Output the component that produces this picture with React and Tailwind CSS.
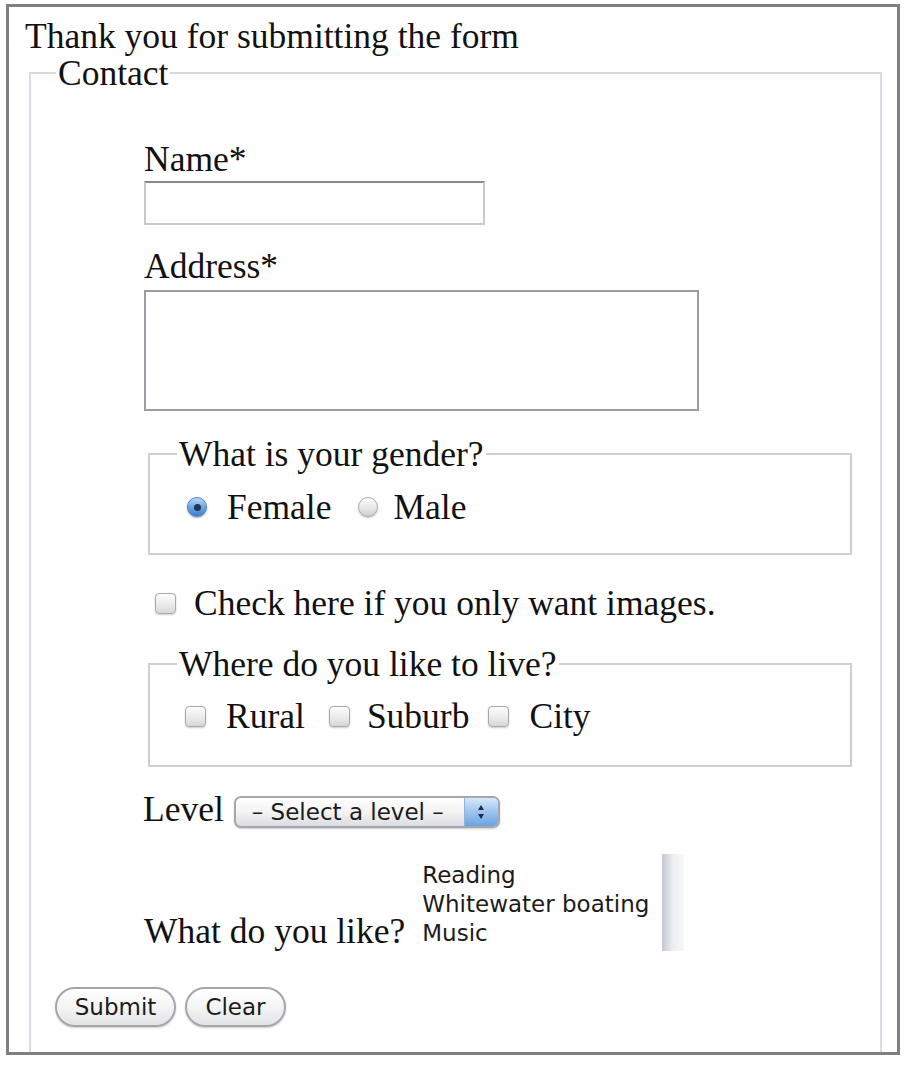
import React from 'react';

const Radio = ({ checked }) =>
  checked ? (
    <span className="flex items-center justify-center w-[20px] h-[20px] rounded-full border border-[#4f7fb8] bg-linear-to-b from-[#bcdaf6] via-[#6aa6e4] to-[#3b7fd0] shadow-[0_1px_2px_rgba(0,0,0,0.35)]">
      <span className="w-[7px] h-[7px] rounded-full bg-[#1d3550]" />
    </span>
  ) : (
    <span className="block w-[20px] h-[20px] rounded-full border border-[#a9abae] bg-linear-to-b from-[#fbfbfb] via-[#e9e9e9] to-[#cfd0d2] shadow-[0_1px_2px_rgba(0,0,0,0.25)]" />
  );

const Checkbox = () => (
  <span className="block w-[21px] h-[21px] rounded-[4px] border border-[#a7a9ad] bg-linear-to-b from-[#fdfdfd] via-[#ededed] to-[#d6d7d9] shadow-[0_1px_2px_rgba(0,0,0,0.2)]" />
);

const Fieldset = ({ legend, className, children }) => (
  <fieldset className={'border-2 border-[#cbcfd6] pl-[27px] ' + className}>
    <legend className="px-[2px]">{legend}</legend>
    {children}
  </fieldset>
);

const PillButton = ({ label, width }) => (
  <button
    type="button"
    className={'h-[40px] rounded-full border-2 border-[#a2a6ad] bg-linear-to-b from-white via-[#f4f4f4] to-[#e2e3e5] shadow-[0_1px_2px_rgba(0,0,0,0.2)] font-[\'DejaVu_Sans\',sans-serif] text-[23px] leading-none text-[#1b1b1b] ' + width}
  >
    {label}
  </button>
);

export default function App() {
  const likes = ['Reading', 'Whitewater boating', 'Music'];

  return (
    <div className="min-h-screen bg-white pt-[4px] pl-[6px]">
      <div className="w-[894px] h-[1051px] border-[3px] border-[#7e7e83] overflow-hidden font-['Liberation_Serif',serif] text-[35.5px] leading-[40px] text-[#111]">
        <p className="pl-[16px] pt-[9px] -mb-[3px]">Thank you for submitting the form</p>

        <fieldset className="ml-[20px] mr-[15px] border-2 border-[#d8dce2] pl-[25px] pb-[80px]">
          <legend className="px-[2px]">Contact</legend>

          <label className="block ml-[88px] mt-[46px]">Name*</label>
          <input
            type="text"
            className="block ml-[88px] mt-[2px] w-[341px] h-[44px] border-2 border-[#c6cad0] border-t-[#868a91] bg-white outline-none"
          />

          <label className="block ml-[88px] mt-[21px]">Address*</label>
          <textarea className="block ml-[88px] mt-[4px] w-[555px] h-[121px] border-2 border-[#999da4] bg-white resize-none outline-none" />

          <Fieldset legend="What is your gender?" className="ml-[92px] mt-[23px] w-[704px] pb-[26px]">
            <div className="mt-[13px] flex items-center pl-[10px]">
              <Radio checked />
              <span className="ml-[20px]">Female</span>
              <span className="ml-[26px]"><Radio /></span>
              <span className="ml-[16px]">Male</span>
            </div>
          </Fieldset>

          <div className="mt-[28px] ml-[99px] flex items-center">
            <Checkbox />
            <span className="ml-[18px]">Check here if you only want images.</span>
          </div>

          <Fieldset legend="Where do you like to live?" className="ml-[92px] mt-[21px] w-[704px] pb-[29px]">
            <div className="mt-[12px] flex items-center pl-[8px]">
              <Checkbox />
              <span className="ml-[20px]">Rural</span>
              <span className="ml-[24px]"><Checkbox /></span>
              <span className="ml-[17px]">Suburb</span>
              <span className="ml-[19px]"><Checkbox /></span>
              <span className="ml-[20px]">City</span>
            </div>
          </Fieldset>

          <div className="mt-[22px] ml-[87px] flex items-start">
            <span>Level</span>
            <div className="ml-[10px] mt-[7px] w-[266px] h-[32px] flex rounded-[7px] border-2 border-[#a3a8b0] bg-linear-to-b from-white via-[#f3f3f3] to-[#dcdde0] shadow-[0_1px_2px_rgba(0,0,0,0.2)] overflow-hidden">
              <span className="flex-1 pl-[16px] font-['DejaVu_Sans',sans-serif] text-[23px] leading-[28px] text-[#1b1b1b]">
                – Select a level –
              </span>
              <span className="w-[34px] flex items-center justify-center border-l border-[#8fb3dc] bg-linear-to-b from-[#d8e8f8] via-[#9cc4ee] to-[#6aa3df]">
                <svg width="8" height="16" viewBox="0 0 8 16">
                  <path d="M4 1 L7 6 L1 6 Z" fill="#1f2d3d" />
                  <path d="M4 15 L7 10 L1 10 Z" fill="#1f2d3d" />
                </svg>
              </span>
            </div>
          </div>

          <div className="mt-[25px] ml-[88px] flex items-end">
            <span>What do you like?</span>
            <div className="ml-[9px] w-[270px] h-[97px] flex bg-white">
              <ul className="flex-1 pt-[7px] pl-[8px] font-['DejaVu_Sans',sans-serif] text-[23px] leading-[29px] text-[#1b1b1b]">
                {likes.map((item) => (
                  <li key={item} className="whitespace-nowrap">{item}</li>
                ))}
              </ul>
              <div className="w-[22px] bg-linear-to-r from-[#c4c8ce] via-[#eceef1] to-[#f8f8f9]" />
            </div>
          </div>

          <div className="mt-[36px] -ml-[1px] flex gap-[9px]">
            <PillButton label="Submit" width="w-[121px]" />
            <PillButton label="Clear" width="w-[101px]" />
          </div>
        </fieldset>
      </div>
    </div>
  );
}
